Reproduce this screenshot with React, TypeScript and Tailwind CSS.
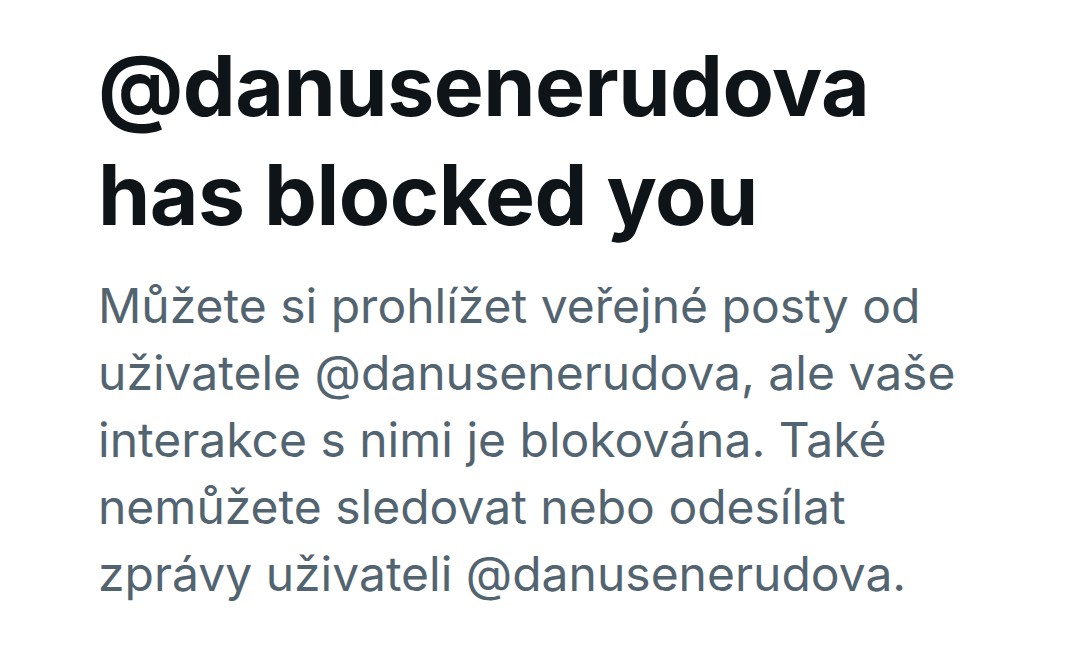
export default function App() {
  return (
    <div className="w-[1080px] h-[653px] bg-white overflow-hidden">
      <div className="pl-[98px] pt-[31px]" style={{ fontFamily: "Inter, 'Noto Sans', sans-serif" }}>
        <h1 className="text-[84px] leading-[109px] font-bold text-[#0f1419] tracking-[-0.5px]">
          @danusenerudova
          <br />
          has blocked you
        </h1>
        <p className="mt-[23px] text-[48px] leading-[67px] text-[#536471]">
          Můžete si prohlížet veřejné posty od
          <br />
          uživatele @danusenerudova, ale vaše
          <br />
          interakce s nimi je blokována. Také
          <br />
          nemůžete sledovat nebo odesílat
          <br />
          zprávy uživateli @danusenerudova.
        </p>
      </div>
    </div>
  );
}
